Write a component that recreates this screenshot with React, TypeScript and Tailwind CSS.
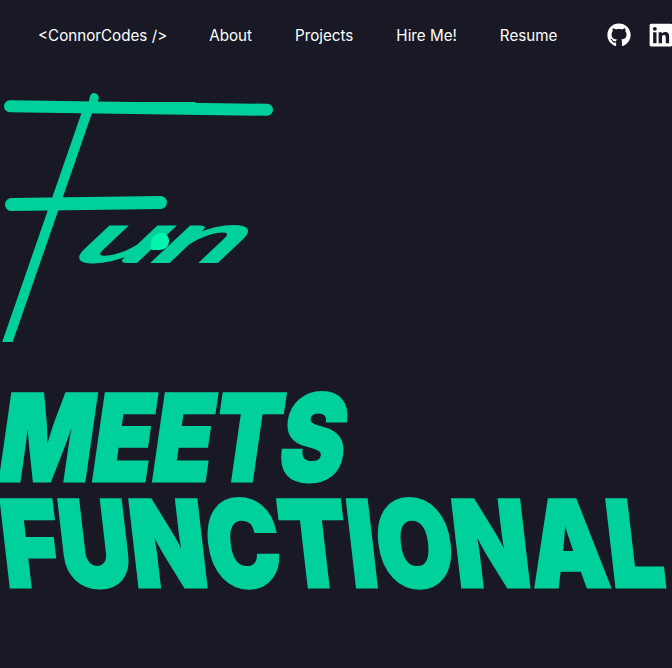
import { FaGithub, FaLinkedin } from 'react-icons/fa';

const links = ['About', 'Projects', 'Hire Me!', 'Resume'];

export default function App() {
  return (
    <div className="h-[668px] w-[672px] overflow-hidden bg-[#181925] font-['Inter',sans-serif] text-[#00d09c]">
      {/* Nav */}
      <nav className="flex h-[71px] w-[720px] items-center pl-[38px] text-[15.2px] text-white">
        <a className="mr-[42px] mt-[2px]">{'<ConnorCodes />'}</a>
        <div className="mt-[2px] flex items-center gap-[43px]">
          {links.map((l) => (
            <a key={l}>{l}</a>
          ))}
        </div>
        <FaGithub className="-mt-[1px] ml-[50px] h-6 w-6" />
        <FaLinkedin className="-mt-[1px] ml-[17px] h-[26px] w-[26px]" />
      </nav>

      {/* Script word */}
      <div className="relative mt-[21px] h-[252px]">
        <h1 className="flex h-full items-start whitespace-nowrap font-['Lato',sans-serif] font-thin leading-none">
          {/* clip drops the stock crossbar, the brush stroke below replaces it */}
          <span className="inline-block origin-top-left translate-x-[80px] -translate-y-[46px] scale-x-[0.75] -skew-x-[24.8deg] text-[332px] leading-none [-webkit-text-stroke:11px_#00d09c] [clip-path:polygon(-40px_0,300px_0,300px_66px,47px_66px,47px_296px,-40px_296px)]">
            F
          </span>
          <span className="inline-block origin-top-left -translate-x-[68px] translate-y-[108px] scale-x-[2.2] -skew-x-[20deg] text-[70px] font-medium italic leading-none tracking-[-1px] [-webkit-text-stroke:2px_#00d09c]">
            un
          </span>
        </h1>
        {/* brush flourishes on the F */}
        <div className="absolute left-[4px] top-[10px] h-[12px] w-[269px] rotate-[0.8deg] rounded-full bg-[#00d09c]" />
        <div className="absolute left-[5px] top-[105px] h-[13px] w-[162px] -rotate-[0.8deg] rounded-full bg-[#00d09c]" />
        <div className="absolute left-[89px] top-[1px] h-[16px] w-[9px] rotate-[12deg] rounded-full bg-[#00d09c]" />
        <div className="absolute left-[151px] top-[141px] h-[17px] w-[18px] rounded-[70%_50%_60%_10%] bg-[#00f5ae]" />
      </div>

      {/* Block headline */}
      <div className="mt-[48px] flex flex-col gap-[14px] text-[120px] font-black uppercase leading-[92px] [-webkit-text-stroke:3px_#00d09c]">
        <span className="ml-[8px] block h-[92px] origin-top-left scale-x-[0.815] -skew-x-[10deg] whitespace-nowrap">
          Meets
        </span>
        <span className="-ml-[4px] block h-[92px] origin-top-left scale-x-[0.822] skew-x-[8deg] whitespace-nowrap">
          Functional
        </span>
      </div>
    </div>
  );
}
